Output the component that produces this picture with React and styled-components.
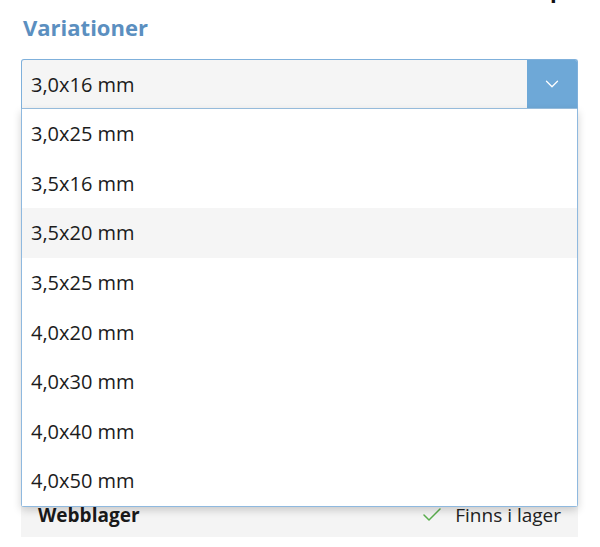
import React from "react";
import styled, { createGlobalStyle } from "styled-components";
import { Check, ChevronDown } from "lucide-react";

const GlobalStyle = createGlobalStyle`
  html, body {
    margin: 0;
    padding: 0;
    background: #ffffff;
    font-family: "Open Sans", "Liberation Sans", sans-serif;
    color: #222;
  }
`;

const Page = styled.div`
  padding: 0 22px 0 21px;
  width: 600px;
  box-sizing: border-box;
`;

// descender of the heading above, cut by the window edge
const TopEdge = styled.div`
  height: 4px;
  overflow: hidden;
  display: flex;
  justify-content: flex-end;
  align-items: flex-end;
  padding-right: 14px;
  span {
    font-size: 22px;
    line-height: 1.3;
    color: #111;
    font-weight: 700;
  }
`;

const Title = styled.h2`
  margin: 9px 0 0;
  padding-left: 2px;
  font-size: 22px;
  line-height: 28px;
  font-weight: 700;
  color: #5b8fc0;
`;

const SelectWrap = styled.div`
  position: relative;
  margin-top: 18px;
  z-index: 2;
`;

const SelectBox = styled.div`
  display: flex;
  align-items: stretch;
  height: 50px;
  box-sizing: border-box;
  border: 1px solid #7fb0db;
  border-bottom-color: #9cc2e4;
  border-radius: 3px 3px 0 0;
  background: #f5f5f5;
  overflow: hidden;
`;

const SelectValue = styled.div`
  flex: 1;
  display: flex;
  align-items: center;
  padding-left: 9px;
  font-size: 20px;
  color: #1c1c1c;
`;

const ArrowButton = styled.div`
  width: 50px;
  background: #6ea8d7;
  display: flex;
  align-items: center;
  justify-content: center;
  color: #ffffff;
`;

const Menu = styled.ul`
  position: absolute;
  top: 50px;
  left: 0;
  right: 0;
  margin: 0;
  padding: 0;
  list-style: none;
  background: #ffffff;
  border: 1px solid #8fb9df;
  border-top: none;
  border-radius: 0 0 3px 3px;
  box-shadow: 0 3px 8px rgba(0, 0, 0, 0.18);
`;

const Option = styled.li`
  height: 49.6px;
  display: flex;
  align-items: center;
  padding-left: 9px;
  font-size: 20px;
  color: #1c1c1c;
  background: ${(p) => (p.$active ? "#f5f5f5" : "#ffffff")};
`;

// the stock panel sits under the open menu; only its last row shows
const InfoPanel = styled.div`
  margin-top: 384px;
  padding: 0 17px;
  background: #f4f4f4;
`;

const InfoRow = styled.div`
  height: 44px;
  display: flex;
  align-items: center;
  justify-content: space-between;
  font-size: 19px;
`;

const Label = styled.span`
  font-weight: 700;
  color: #1a1a1a;
`;

const Value = styled.span`
  display: flex;
  align-items: center;
  gap: 11px;
  color: #222;
  svg {
    color: #5aae4e;
  }
`;

const options = [
  "3,0x25 mm",
  "3,5x16 mm",
  "3,5x20 mm",
  "3,5x25 mm",
  "4,0x20 mm",
  "4,0x30 mm",
  "4,0x40 mm",
  "4,0x50 mm",
];

export default function App() {
  return (
    <Page>
      <GlobalStyle />
      <TopEdge>
        <span>p</span>
      </TopEdge>
      <Title>Variationer</Title>
      <SelectWrap>
        <SelectBox>
          <SelectValue>3,0x16 mm</SelectValue>
          <ArrowButton>
            <ChevronDown size={22} strokeWidth={1.4} />
          </ArrowButton>
        </SelectBox>
        <Menu>
          {options.map((o, i) => (
            <Option key={o} $active={i === 2}>
              {o}
            </Option>
          ))}
        </Menu>
      </SelectWrap>
      <InfoPanel>
        <InfoRow>
          <Label>Webblager</Label>
          <Value>
            <Check size={24} strokeWidth={1.5} />
            Finns i lager
          </Value>
        </InfoRow>
      </InfoPanel>
    </Page>
  );
}
